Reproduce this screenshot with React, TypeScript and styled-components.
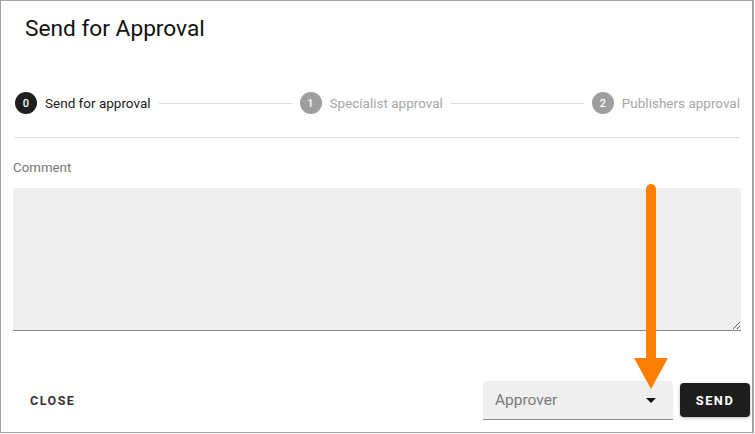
import React from "react";
import styled, { createGlobalStyle } from "styled-components";

const Global = createGlobalStyle`
  html, body { margin: 0; padding: 0; background: #fff; }
  body { font-family: Roboto, "Liberation Sans", sans-serif; }
`;

const Dialog = styled.div`
  position: relative;
  box-sizing: border-box;
  width: 754px;
  height: 433px;
  border: 1px solid #a3a3a3;
  border-right-width: 2px;
  display: flex;
  flex-direction: column;
  background: #fff;
  overflow: hidden;
`;

const Title = styled.h2`
  margin: 0;
  padding: 14px 0 0 24px;
  font-size: 22.7px;
  line-height: 28px;
  font-weight: 400;
  color: #111;
`;

const Stepper = styled.div`
  display: flex;
  align-items: center;
  height: 24px;
  margin: 48px 12px 0 14px;
`;

const Step = styled.div`
  display: flex;
  align-items: center;
  gap: 8px;
`;

const Circle = styled.span<{ $active?: boolean }>`
  width: 22px;
  height: 22px;
  border-radius: 50%;
  background: ${(p) => (p.$active ? "#1e1e1e" : "#9e9e9e")};
  color: #fff;
  font-size: 11px;
  font-weight: 500;
  display: flex;
  align-items: center;
  justify-content: center;
`;

const StepLabel = styled.span<{ $active?: boolean }>`
  font-size: 13.5px;
  color: ${(p) => (p.$active ? "#1a1a1a" : "#a6a6a6")};
  white-space: nowrap;
`;

const Connector = styled.span`
  flex: 1;
  height: 1px;
  background: #dcdcdc;
  margin: 0 8px;
`;

const Divider = styled.hr`
  border: none;
  height: 1px;
  background: #dcdcdc;
  margin: 22px 12px 0 13px;
`;

const Content = styled.div`
  padding: 0 11px 0 12px;
  display: flex;
  flex-direction: column;
`;

const FieldLabel = styled.label`
  margin-top: 21px;
  font-size: 13.3px;
  line-height: 17px;
  color: #777;
`;

const TextArea = styled.textarea`
  margin-top: 12px;
  box-sizing: border-box;
  width: 100%;
  height: 143px;
  background: #efefef;
  border: none;
  border-bottom: 1px solid #8a8a8a;
  border-radius: 4px 4px 0 0;
  resize: both;
  outline: none;
  font-family: inherit;
`;

const Footer = styled.div`
  margin-top: auto;
  display: flex;
  align-items: center;
  padding: 0 2px 12px 15px;
`;

const TextButton = styled.button`
  background: none;
  border: none;
  padding: 8px 14px;
  font-family: inherit;
  font-size: 12.5px;
  font-weight: 700;
  letter-spacing: 1.5px;
  color: #333;
  cursor: pointer;
`;

const Spacer = styled.div`
  flex: 1;
`;

const Select = styled.div`
  box-sizing: border-box;
  width: 190px;
  height: 39px;
  background: #efefef;
  border-bottom: 1px solid #8a8a8a;
  border-radius: 4px 4px 0 0;
  display: flex;
  align-items: center;
  padding: 0 17px 0 12px;
  margin-top: 1px;
`;

const SelectText = styled.span`
  flex: 1;
  font-size: 15.5px;
  color: #7a7a7a;
`;

const Caret = styled.span`
  width: 0;
  height: 0;
  border-left: 5px solid transparent;
  border-right: 5px solid transparent;
  border-top: 5px solid #111;
`;

const SendButton = styled.button`
  margin-left: 7px;
  width: 70px;
  height: 34px;
  background: #1d1d1d;
  color: #fff;
  border: none;
  border-radius: 4px;
  font-family: inherit;
  font-size: 12.8px;
  font-weight: 700;
  letter-spacing: 1.5px;
  box-shadow: 0 1px 3px rgba(0, 0, 0, 0.3);
`;

const ArrowOverlay = styled.svg`
  position: absolute;
  left: 630px;
  top: 180px;
  pointer-events: none;
`;

const steps = [
  { n: 0, label: "Send for approval", active: true },
  { n: 1, label: "Specialist approval", active: false },
  { n: 2, label: "Publishers approval", active: false },
];

export default function App() {
  return (
    <>
      <Global />
      <Dialog>
        <Title>Send for Approval</Title>
        <Stepper>
          {steps.map((s, i) => (
            <React.Fragment key={s.n}>
              {i > 0 && <Connector />}
              <Step>
                <Circle $active={s.active}>{s.n}</Circle>
                <StepLabel $active={s.active}>{s.label}</StepLabel>
              </Step>
            </React.Fragment>
          ))}
        </Stepper>
        <Divider />
        <Content>
          <FieldLabel>Comment</FieldLabel>
          <TextArea />
        </Content>
        <Footer>
          <TextButton>CLOSE</TextButton>
          <Spacer />
          <Select>
            <SelectText>Approver</SelectText>
            <Caret />
          </Select>
          <SendButton>SEND</SendButton>
        </Footer>
        <ArrowOverlay width="40" height="212" viewBox="0 0 40 212">
          <line x1="20" y1="8" x2="20" y2="182" stroke="#ff8000" strokeWidth="10" strokeLinecap="round" />
          <polygon points="3,177 37,177 20,208" fill="#ff8000" />
        </ArrowOverlay>
      </Dialog>
    </>
  );
}
